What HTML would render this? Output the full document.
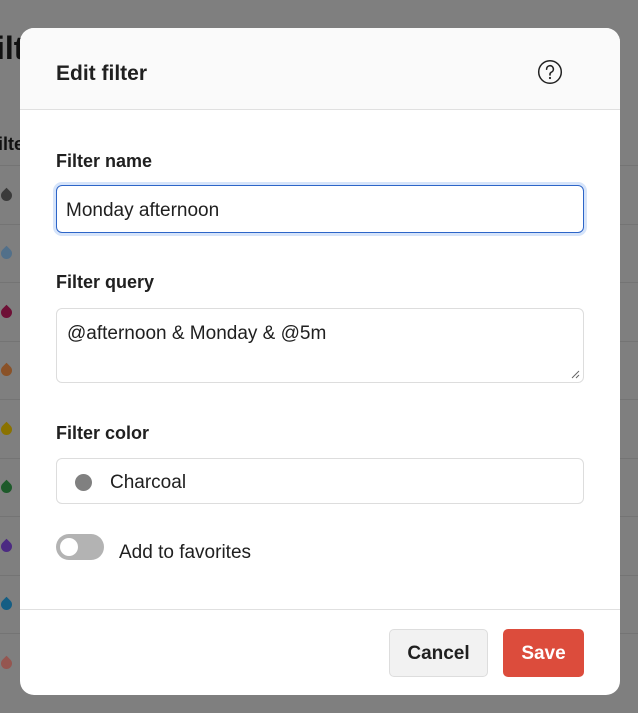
<!DOCTYPE html>
<html><head><style>
*{box-sizing:border-box;margin:0;padding:0}
body{width:638px;height:713px;overflow:hidden;background:#7f7f7f;font-family:"Liberation Sans",sans-serif;position:relative}
.bgt{position:absolute;color:#111;font-weight:bold}
.row{position:absolute;left:0;width:638px;height:1px;background:#747474}
.drop{position:absolute;left:1px;width:11px;height:11px;border-radius:0 50% 50% 50%;transform:rotate(45deg)}
.modal{position:absolute;left:20px;top:28px;width:600px;height:667px;background:#fff;border-radius:14px;overflow:hidden}
.hdr{height:82px;background:#fafafa;border-bottom:1px solid #e0e0e0;position:relative}
.hdr h1{position:absolute;left:36px;top:34px;font-size:21px;font-weight:bold;color:#202020}
.lbl{position:absolute;left:36px;font-size:18px;font-weight:bold;color:#202020}
.inp{position:absolute;left:36px;width:528px;border:1px solid #ddd;border-radius:6px;font-size:19px;color:#202020;padding-left:10px}
.foot{position:absolute;left:0;top:581px;width:600px;height:1px;background:#e0e0e0}
.btn{position:absolute;top:601px;height:48px;border-radius:5px;font-size:19px;font-weight:bold;text-align:center;line-height:50px}
</style></head><body>
<div class="bgt" style="left:-4px;top:30px;font-size:32px">ilt</div>
<div class="bgt" style="left:-2px;top:134px;font-size:18px">ilte</div>
<div class="row" style="top:165px"></div><div class="row" style="top:224px"></div><div class="row" style="top:282px"></div><div class="row" style="top:341px"></div><div class="row" style="top:399px"></div><div class="row" style="top:458px"></div><div class="row" style="top:516px"></div><div class="row" style="top:575px"></div><div class="row" style="top:633px"></div>
<div class="drop" style="top:190px;background:#3a3a3a"></div>
<div class="drop" style="top:248px;background:#52708a"></div>
<div class="drop" style="top:307px;background:#6e1036"></div>
<div class="drop" style="top:365px;background:#8a5228"></div>
<div class="drop" style="top:424px;background:#8a7200"></div>
<div class="drop" style="top:482px;background:#1d5a2a"></div>
<div class="drop" style="top:541px;background:#4c2a82"></div>
<div class="drop" style="top:599px;background:#155e84"></div>
<div class="drop" style="top:658px;background:#955650"></div>
<div class="modal">
<div class="hdr"><h1>Edit filter</h1>
<svg style="position:absolute;left:517px;top:31px" width="26" height="26" viewBox="0 0 26 26"><circle cx="13" cy="13" r="11.3" fill="none" stroke="#222" stroke-width="1.5"/><path d="M9.6 10.2a3.4 3.4 0 1 1 4.6 3.1c-.8.4-1.2 1-1.2 1.9v.8" fill="none" stroke="#222" stroke-width="1.6" stroke-linecap="round"/><circle cx="13" cy="19" r="1.1" fill="#222"/></svg></div>
<div class="lbl" style="top:123px">Filter name</div>
<div class="inp" style="top:157px;height:48px;line-height:50px;border:1.5px solid #2d65c8;box-shadow:0 0 0 3px #d6e4fa;padding-left:9px">Monday afternoon</div>
<div class="lbl" style="top:244px">Filter query</div>
<div class="inp" style="top:280px;height:75px;padding-top:14px;line-height:22px">@afternoon &amp; Monday &amp; @5m
<svg style="position:absolute;right:3px;bottom:3px" width="10" height="10"><path d="M9 2L2 9M9 6L6 9" stroke="#666"/></svg></div>
<div class="lbl" style="top:395px">Filter color</div>
<div class="inp" style="top:430px;height:46px;line-height:48px;padding-left:53px">Charcoal<span style="position:absolute;left:18px;top:15px;width:17px;height:17px;border-radius:50%;background:#808080"></span></div>
<div style="position:absolute;left:36px;top:506px;width:48px;height:26px;border-radius:13px;background:#b3b3b3"><span style="position:absolute;left:4px;top:4px;width:18px;height:18px;border-radius:50%;background:#fff"></span></div>
<div style="position:absolute;left:99px;top:514px;font-size:19px;color:#202020">Add to favorites</div>
<div class="foot"></div>
<div class="btn" style="left:369px;width:99px;background:#f2f2f2;border:1px solid #ddd;color:#202020;line-height:48px">Cancel</div>
<div class="btn" style="left:483px;width:81px;background:#dc4c3c;color:#fff">Save</div>
</div>
</body></html>
